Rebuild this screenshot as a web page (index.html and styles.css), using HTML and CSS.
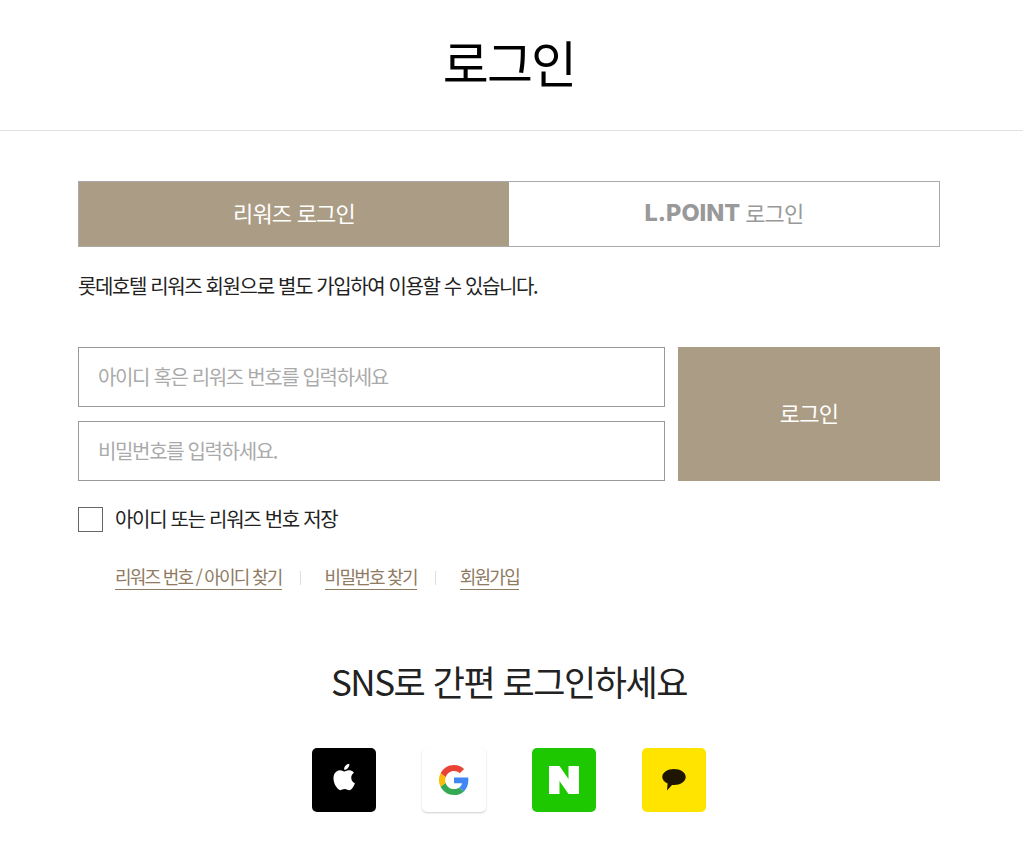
FILE: index.html
```html
<!DOCTYPE html>
<html lang="ko">
<head>
<meta charset="utf-8">
<title>로그인</title>
<link rel="stylesheet" href="styles.css">
</head>
<body>
<header class="page-head"><h1 class="page-title">로그인</h1></header>
<main class="content">
  <div class="tabs">
    <a class="tab tab-active">리워즈 로그인</a>
    <a class="tab"><span class="lpoint">L.POINT</span> 로그인</a>
  </div>
  <p class="intro">롯데호텔 리워즈 회원으로 별도 가입하여 이용할 수 있습니다.</p>
  <form class="login-form">
    <div class="fields">
      <input class="field" type="text" placeholder="아이디 혹은 리워즈 번호를 입력하세요">
      <input class="field" type="password" placeholder="비밀번호를 입력하세요.">
    </div>
    <button class="submit" type="button">로그인</button>
  </form>
  <label class="remember"><span class="check"></span><span class="remember-text">아이디 또는 리워즈 번호 저장</span></label>
  <ul class="links">
    <li class="link-item"><a class="link">리워즈 번호 / 아이디 찾기</a></li>
    <li class="link-item"><a class="link">비밀번호 찾기</a></li>
    <li class="link-item"><a class="link">회원가입</a></li>
  </ul>
  <h2 class="sns-title">SNS로 간편 로그인하세요</h2>
  <div class="sns">
    <a class="sns-btn sns-apple"><svg width="29" height="34" viewBox="0 2.500 24 28"><path fill="#fff" d="M17.6 14.6c0-2.7 2.2-4 2.3-4.1-1.3-1.8-3.200-2.100-3.900-2.100-1.700-.2-3.200 1-4.100 1-.9 0-2.200-1-3.600-1-1.800 0-3.500 1.100-4.500 2.700-1.900 3.300-.5 8.300 1.400 11 .9 1.300 2 2.800 3.400 2.800 1.400-.1 1.900-.9 3.600-.9 1.600 0 2.100.9 3.600.9 1.500 0 2.400-1.300 3.300-2.700 1-1.500 1.500-3 1.500-3.100-.1 0-3-1.100-3-4.500zM14.900 6.500c.7-.9 1.300-2.200 1.100-3.500-1.100 0-2.400.7-3.200 1.700-.7.800-1.300 2.100-1.100 3.300 1.200.1 2.400-.6 3.200-1.500z"/></svg></a>
    <a class="sns-btn sns-google"><svg width="30" height="30" viewBox="0 0 48 48"><path fill="#EA4335" d="M24 9.500c3.500 0 6.700 1.200 9.200 3.600l6.900-6.900C35.900 2.400 30.500 0 24 0 14.600 0 6.500 5.400 2.600 13.200l8 6.200C12.500 13.700 17.800 9.500 24 9.500z"/><path fill="#4285F4" d="M47 24.500c0-1.600-.1-3.100-.4-4.500H24v9h12.900c-.6 3-2.200 5.500-4.700 7.200l7.700 6c4.500-4.200 7.100-10.400 7.100-17.700z"/><path fill="#FBBC05" d="M10.600 28.600C10.100 27.200 9.800 25.600 9.800 24s.3-3.200.8-4.600l-8-6.200C.9 16.500 0 20.100 0 24s.9 7.500 2.600 10.800l8-6.200z"/><path fill="#34A853" d="M24 48c6.500 0 11.900-2.100 15.900-5.800l-7.700-6c-2.200 1.400-4.900 2.300-8.200 2.300-6.200 0-11.500-4.200-13.400-9.900l-8 6.200C6.500 42.600 14.600 48 24 48z"/></svg></a>
    <a class="sns-btn sns-naver"><svg width="30" height="28" viewBox="0 0 30 28"><path fill="#fff" d="M0 0h10.500l9 13V0H30v28H19.500l-9-13v13H0z"/></svg></a>
    <a class="sns-btn sns-kakao"><svg width="24" height="22" viewBox="0 0 24 22"><path fill="#1e1600" d="M12 0c6.400 0 11.700 3.500 11.700 8s-5.300 8-11.700 8c-.7 0-1.400 0-2-.1L5 21.500l.6-7C2.400 13 .3 10.700.3 8 .3 3.500 5.600 0 12 0z"/></svg></a>
  </div>
</main>
</body>
</html>
```

FILE: styles.css
```css
* { box-sizing: border-box; }
html, body { margin: 0; padding: 0; background: #fff; }
body {
  font-family: "Noto Sans CJK KR", "Noto Sans", sans-serif;
  color: #222;
  height: 852px;
  overflow: hidden;
}
.page-head {
  height: 131px;
  border-bottom: 1px solid #e1e1e1;
  padding-right: 5px;
  text-align: center;
}
.page-title {
  margin: 0;
  font-size: 50px;
  font-weight: 400;
  line-height: 122px;
  letter-spacing: -1.8px;
  color: #000;
}
.content { width: 1018px; padding: 50px 78px 0; }
.tabs { display: flex; height: 66px; border: 1px solid #aaa; }
.tab {
  flex: 1;
  display: flex;
  align-items: center;
  justify-content: center;
  gap: 5px;
  padding-bottom: 4px;
  font-size: 22px;
  letter-spacing: -0.8px;
  color: #999;
}
.tab-active { background: #ab9c85; color: #fff; flex: 0 0 430px; }
.lpoint { font-family: Inter, sans-serif; font-weight: 800; font-size: 23.500px; letter-spacing: 0; color: #999; }
.intro {
  margin: 24px 0 0;
  font-size: 20px;
  line-height: 30px;
  letter-spacing: -1.380px;
  color: #222;
}
.login-form { display: flex; gap: 13px; margin-top: 46px; }
.fields { flex: 0 0 587px; display: flex; flex-direction: column; gap: 14px; }
.field {
  height: 60px;
  border: 1px solid #999;
  border-radius: 0;
  padding: 0 19px 2px;
  font: 400 20px "Noto Sans CJK KR", sans-serif;
  letter-spacing: -1.350px;
  outline: none;
}
.field::placeholder { color: #aaa; opacity: 1; }
.submit {
  flex: 1;
  border: 0;
  padding: 0 0 4px;
  background: #ab9c85;
  color: #fff;
  font: 400 22px "Noto Sans CJK KR", sans-serif;
  letter-spacing: -0.8px;
}
.remember { display: flex; align-items: flex-start; gap: 12px; height: 25px; margin-top: 26px; font-size: 20px; letter-spacing: -1.300px; color: #222; }
.remember-text { line-height: 23px; }
.check { width: 25px; height: 25px; border: 1px solid #666; background: #fff; }
.links { display: flex; list-style: none; margin: 33px 0 0; padding: 0 0 0 37px; }
.link-item { display: flex; align-items: center; font-size: 18px; letter-spacing: -1.750px; line-height: 24px; }
.link-item + .link-item::before {
  content: "";
  width: 1px;
  height: 14px;
  background: #ddd;
  margin: 0 24px 0 18px;
}
.link { color: #8f7b62; border-bottom: 1px solid #8f7b62; display: block; height: 25px; line-height: 22px; }
.sns-title {
  margin: 63px 0 0;
  text-align: center;
  font-size: 35px;
  font-weight: 400;
  line-height: 56px;
  letter-spacing: -1.450px;
  color: #222;
}
.sns { display: flex; justify-content: center; gap: 46.500px; margin-top: 39px; }
.sns-btn { width: 63.500px; height: 63.500px; border-radius: 5px; display: flex; align-items: center; justify-content: center; }
.sns-apple { background: #000; }
.sns-google { background: #fff; box-shadow: 0 1px 2px rgba(0,0,0,.2); }
.sns-naver { background: #1ec800; }
.sns-kakao { background: #ffe400; }
```
